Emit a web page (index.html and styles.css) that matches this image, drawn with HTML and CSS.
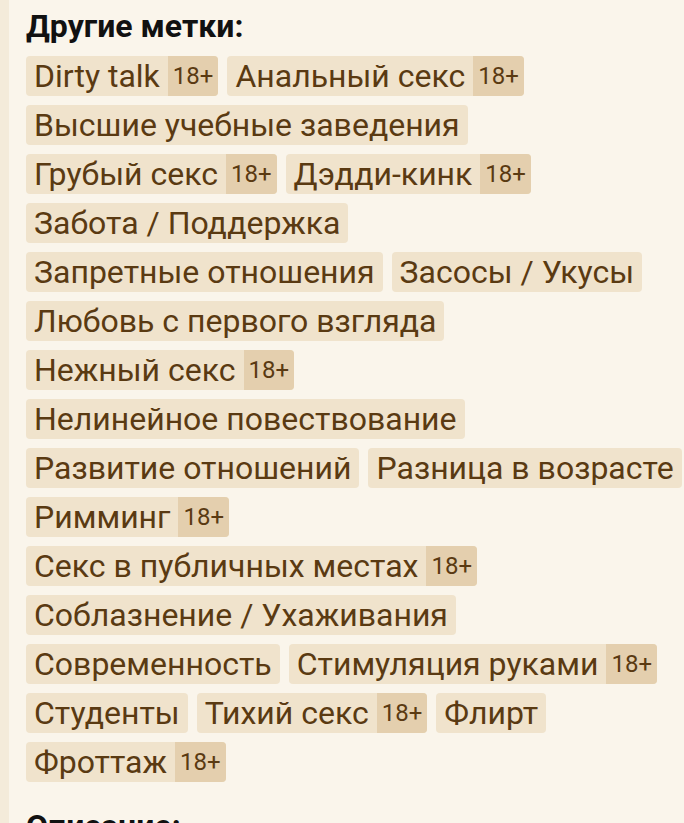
FILE: index.html
```html
<!DOCTYPE html>
<html lang="ru">
<head>
  <meta charset="UTF-8">
  <meta name="viewport" content="width=device-width, initial-scale=1.0">
  <title>Метки</title>
  <link rel="stylesheet" href="styles.css">
</head>
<body>
  <div class="page">
    <div class="side-strip"></div>

    <div class="content">
      <h3 class="section-title">Другие метки:</h3>
      <div class="tags">
        <span class="tag"><span class="tag-name">Dirty talk</span><span class="tag-adult">18+</span></span>
        <span class="tag"><span class="tag-name">Анальный секс</span><span class="tag-adult">18+</span></span>
        <span class="tag"><span class="tag-name">Высшие учебные заведения</span></span>
        <span class="tag"><span class="tag-name">Грубый секс</span><span class="tag-adult">18+</span></span>
        <span class="tag"><span class="tag-name">Дэдди-кинк</span><span class="tag-adult">18+</span></span>
        <span class="tag"><span class="tag-name">Забота / Поддержка</span></span>
        <span class="tag"><span class="tag-name">Запретные отношения</span></span>
        <span class="tag"><span class="tag-name">Засосы / Укусы</span></span>
        <span class="tag"><span class="tag-name">Любовь с первого взгляда</span></span>
        <span class="tag"><span class="tag-name">Нежный секс</span><span class="tag-adult">18+</span></span>
        <span class="tag"><span class="tag-name">Нелинейное повествование</span></span>
        <span class="tag"><span class="tag-name">Развитие отношений</span></span>
        <span class="tag"><span class="tag-name">Разница в возрасте</span></span>
        <span class="tag"><span class="tag-name">Римминг</span><span class="tag-adult">18+</span></span>
        <span class="tag"><span class="tag-name">Секс в публичных местах</span><span class="tag-adult">18+</span></span>
        <span class="tag"><span class="tag-name">Соблазнение / Ухаживания</span></span>
        <span class="tag"><span class="tag-name">Современность</span></span>
        <span class="tag"><span class="tag-name">Стимуляция руками</span><span class="tag-adult">18+</span></span>
        <span class="tag"><span class="tag-name">Студенты</span></span>
        <span class="tag"><span class="tag-name">Тихий секс</span><span class="tag-adult">18+</span></span>
        <span class="tag"><span class="tag-name">Флирт</span></span>
        <span class="tag"><span class="tag-name">Фроттаж</span><span class="tag-adult">18+</span></span>
      </div>

      <h3 class="section-title description">Описание:</h3>
    </div>
  </div>
</body>
</html>
```

FILE: styles.css
```css
/* page */
body {
  margin: 0;
  background-color: #faf5eb;
  font-family: Roboto, "Noto Sans", sans-serif;
}

.page {
  display: flex;
  min-height: 100vh;
}

.side-strip {
  flex: 0 0 9px;
  background-color: #f4ebda;
}

.content {
  flex: 1;
  padding: 0 0 0 17px;
}

/* headings */
.section-title {
  margin: 6px 0 10px;
  font-size: 32px;
  font-weight: 700;
  line-height: 40px;
  color: #111;
}

.section-title.description {
  margin-top: 24px;
}

/* tag list */
.tags {
  display: flex;
  flex-wrap: wrap;
  gap: 9px 9px;
}

.tag {
  display: inline-flex;
  height: 40px;
  border-radius: 4px;
  overflow: hidden;
  background-color: #f0e3cc;
  color: #5a3a12;
  white-space: nowrap;
}

.tag-name {
  display: flex;
  align-items: center;
  padding: 0 8px;
  font-size: 32px;
}

.tag-adult {
  display: flex;
  align-items: center;
  padding: 0 5px;
  font-size: 24px;
  background-color: #e4cfae;
}
```
